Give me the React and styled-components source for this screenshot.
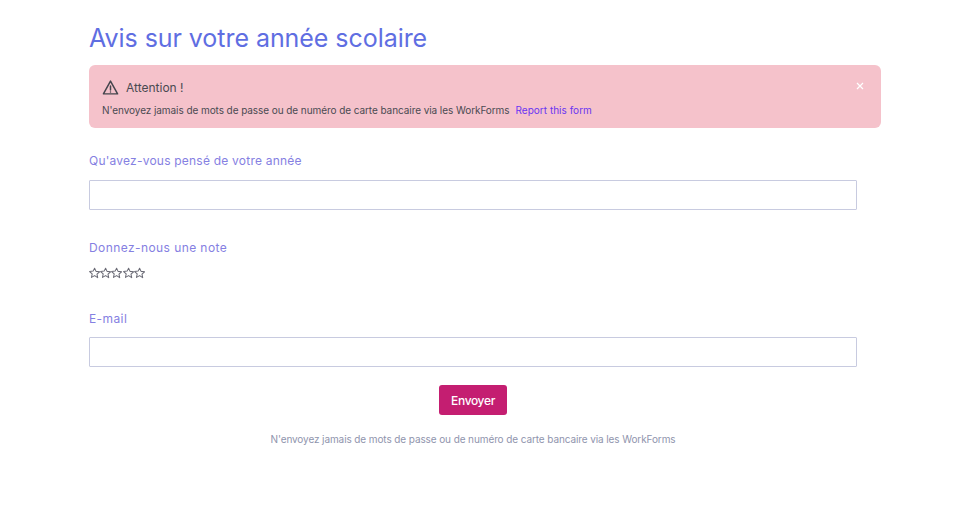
import React from "react";
import styled, { createGlobalStyle } from "styled-components";

const Global = createGlobalStyle`
  html, body { margin: 0; padding: 0; background: #fff; }
  body { font-family: "Inter", "Liberation Sans", sans-serif; }
`;
const Page = styled.main`
  width: 953px;
  height: 527px;
  box-sizing: border-box;
  padding: 22px 72px 0 89px;
  overflow: hidden;
`;
const Title = styled.h1`
  margin: 0;
  font: 400 25px/32px "Inter", sans-serif;
  letter-spacing: -0.05px;
  color: #5f6ee2;
`;
const Alert = styled.section`
  position: relative;
  box-sizing: border-box;
  height: 63px;
  margin-top: 11px;
  padding: 13px 13px;
  border-radius: 6px;
  background: #f5c2cb;
  color: #4a4a52;
`;
const AlertHead = styled.div`
  display: flex;
  align-items: center;
  gap: 7px;
  height: 19px;
  font-size: 12px;
`;
const AlertBody = styled.div`
  margin-top: 6px;
  display: flex;
  gap: 6px;
  font-size: 10px;
  line-height: 14px;
  letter-spacing: -0.07px;
  white-space: nowrap;
`;
const Report = styled.a`
  color: #6a35f2;
  letter-spacing: 0.02px;
`;
const Close = styled.button`
  position: absolute;
  top: 16px;
  right: 16px;
  width: 10px;
  height: 10px;
  padding: 0;
  border: 0;
  background: none;
  display: flex;
`;
const Field = styled.div`
  width: 768px;
  margin-top: ${(p) => p.$top}px;
`;
const Label = styled.label`
  display: block;
  font-size: 12px;
  line-height: 16px;
  letter-spacing: ${(p) => p.$spacing ?? 0.22}px;
  color: #8580e2;
`;
const Input = styled.input`
  display: block;
  box-sizing: border-box;
  width: 768px;
  height: 30px;
  margin-top: ${(p) => p.$gap ?? 11}px;
  border: 1px solid #c8cbe0;
  border-radius: 1px;
  background: #fff;
  outline: none;
`;
const Stars = styled.div`
  display: flex;
  margin-top: 11px;
  height: 12px;
`;
const Submit = styled.div`
  width: 768px;
  display: flex;
  justify-content: center;
  margin-top: 18px;
`;
const Button = styled.button`
  width: 68px;
  height: 30px;
  border: 0;
  border-radius: 3px;
  background: #c41e71;
  color: #fff;
  font: 500 12px "Inter", sans-serif;
  letter-spacing: -0.35px;
`;
const Foot = styled.p`
  width: 768px;
  margin: 17px 0 0;
  text-align: center;
  font-size: 10px;
  line-height: 14px;
  letter-spacing: -0.1px;
  color: #8f94ad;
`;

const Star = () => (
  <svg width="11.2" height="12" viewBox="1 1 22 22" fill="none" stroke="#6a6a75" strokeWidth="2" strokeLinejoin="round">
    <path d="M12 2.5l2.9 6.3 6.9.8-5.1 4.7 1.4 6.8L12 17.1l-6.1 3.5 1.4-6.8-5.1-4.7 6.9-.8z" />
  </svg>
);

export default function App() {
  return (
    <Page>
      <Global />
      <Title>Avis sur votre année scolaire</Title>
      <Alert>
        <AlertHead>
          <svg width="17" height="17" viewBox="0 0 24 24" fill="none" stroke="#45454d" strokeWidth="2.1" strokeLinejoin="round" strokeLinecap="round">
            <path d="M12 3L2 21h20z" />
            <path d="M12 10v5.5M12 18.2v.1" />
          </svg>
          Attention !
        </AlertHead>
        <AlertBody>
          <span>N'envoyez jamais de mots de passe ou de numéro de carte bancaire via les WorkForms</span>
          <Report>Report this form</Report>
        </AlertBody>
        <Close aria-label="Fermer">
          <svg width="10" height="10" viewBox="0 0 10 10" stroke="#fff" strokeWidth="1.2">
            <path d="M2 2l6 6M8 2l-6 6" />
          </svg>
        </Close>
      </Alert>
      <Field $top={25}>
        <Label>Qu'avez-vous pensé de votre année</Label>
        <Input />
      </Field>
      <Field $top={30}>
        <Label $spacing={0.42}>Donnez-nous une note</Label>
        <Stars>{[0, 1, 2, 3, 4].map((i) => <Star key={i} />)}</Stars>
      </Field>
      <Field $top={32}>
        <Label $spacing={0.4}>E-mail</Label>
        <Input $gap={10} />
      </Field>
      <Submit><Button>Envoyer</Button></Submit>
      <Foot>N'envoyez jamais de mots de passe ou de numéro de carte bancaire via les WorkForms</Foot>
    </Page>
  );
}
